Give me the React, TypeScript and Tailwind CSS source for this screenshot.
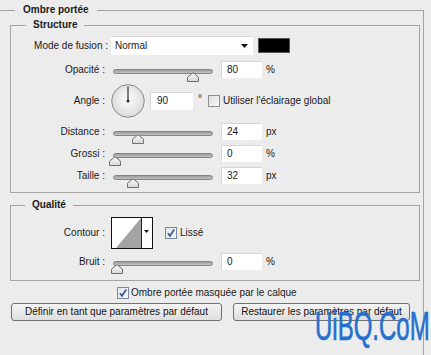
import React from 'react';

function Slider({ at }: { at: number }) {
  return (
    <div className="relative mt-[4px] h-[5px] w-[100px] shrink-0 self-start rounded-full border border-[#858585] bg-[linear-gradient(#9c9c9c,#c2c2c2)]">
      <svg className="absolute top-[2px]" style={{ left: at }} width="12" height="10" viewBox="0 0 12 10">
        <defs>
          <linearGradient id="thumb" x1="0" y1="0" x2="0" y2="1">
            <stop offset="0" stopColor="#fafafa" />
            <stop offset="1" stopColor="#d6d6d6" />
          </linearGradient>
        </defs>
        <path d="M0.5 9.5V5.2L6 0.7L11.5 5.2V9.5Z" fill="url(#thumb)" stroke="#6e6e6e" />
      </svg>
    </div>
  );
}

function Field({ value, unit }: { value: string; unit?: string }) {
  return (
    <>
      <div className="ml-[8px] flex h-[17px] w-[41px] shrink-0 items-center border border-[#d6d6d6] border-r-white border-b-white bg-white pl-[5px]">
        {value}
      </div>
      {unit && <span className="ml-[4px]">{unit}</span>}
    </>
  );
}

function Check({ on }: { on?: boolean }) {
  return (
    <svg width="12" height="12" viewBox="0 0 12 12" className="shrink-0">
      <defs>
        <linearGradient id={on ? 'cbOn' : 'cbOff'} x1="0" y1="0" x2="1" y2="1">
          <stop offset="0" stopColor={on ? '#dfe3ec' : '#dcdcdc'} />
          <stop offset="1" stopColor="#fbfbfb" />
        </linearGradient>
      </defs>
      <rect x="0.5" y="0.5" width="11" height="11" fill={on ? 'url(#cbOn)' : 'url(#cbOff)'} stroke={on ? '#7d879c' : '#8f8f8f'} />
      {on && <path d="M3 6.2L5 9L9.2 2.6" fill="none" stroke="#3b5a99" strokeWidth="1.8" />}
    </svg>
  );
}

function Row({ label, className, children }: { label: string; className?: string; children: React.ReactNode }) {
  return (
    <div className={`flex items-center ${className ?? ''}`}>
      <div className="w-[94px] shrink-0 text-right">{label}</div>
      {children}
    </div>
  );
}

export default function App() {
  return (
    <div className="relative h-[355px] w-[431px] overflow-hidden bg-[#ececec] font-['Liberation_Sans',Arial,sans-serif] text-[10px] leading-[12px] text-[#1a1a1a]">
      <fieldset className="mt-[3px] mr-[7px] border border-b-0 border-l-0 border-[#a3a3a3] pr-[3px] pb-[40px] pl-[10px]">
        <legend className="ml-[5px] px-[8px] font-bold leading-[14px]">Ombre portée</legend>

        <fieldset className="mt-[1px] border border-[#a3a3a3] pb-[8px]">
          <legend className="ml-[15px] px-[7px] font-bold leading-[14px]">Structure</legend>

          <div className="mt-[4px] flex h-[19px] items-center">
            <div className="w-[97px] shrink-0 text-right">Mode de fusion :</div>
            <div className="ml-[3px] flex h-[19px] w-[142px] items-center justify-between border-t border-[#d8d8d8] bg-white pr-[5px] pl-[4px]">
              <span>Normal</span>
              <svg width="7" height="4" viewBox="0 0 7 4">
                <path d="M0 0H7L3.5 4Z" fill="#111" />
              </svg>
            </div>
            <div className="ml-[5px] h-[15px] w-[32px] border border-[#555] bg-black" />
          </div>

          <Row label="Opacité :" className="mt-[6px] h-[17px]">
            <div className="ml-[8px]">
              <Slider at={73} />
            </div>
            <Field value="80" unit="%" />
          </Row>

          <Row label="Angle :" className="mt-[6px] h-[34px]">
            <svg className="ml-[6px] shrink-0" width="34" height="34" viewBox="0 0 34 34">
              <defs>
                <radialGradient id="dial" cx="0.5" cy="0.45" r="0.55">
                  <stop offset="0" stopColor="#ffffff" />
                  <stop offset="1" stopColor="#d9d9d9" />
                </radialGradient>
              </defs>
              <circle cx="17" cy="17" r="16.3" fill="url(#dial)" stroke="#8a8a8a" />
              <line x1="17" y1="17" x2="17" y2="2.5" stroke="#444" strokeWidth="1.4" />
              <circle cx="17" cy="17" r="1.6" fill="#333" />
            </svg>
            <div className="ml-[5px] flex h-[18px] w-[43px] shrink-0 items-center border border-[#d6d6d6] border-r-white border-b-white bg-white pl-[6px]">
              90
            </div>
            <span className="ml-[5px] w-[10px] self-start pt-[9px]">°</span>
            <Check />
            <span className="ml-[3px]">Utiliser l'éclairage global</span>
          </Row>

          <Row label="Distance :" className="mt-[5px] h-[17px]">
            <div className="ml-[8px]">
              <Slider at={18} />
            </div>
            <Field value="24" unit="px" />
          </Row>

          <Row label="Grossi :" className="mt-[5px] h-[17px]">
            <div className="ml-[8px]">
              <Slider at={-5} />
            </div>
            <Field value="0" unit="%" />
          </Row>

          <Row label="Taille :" className="mt-[5px] h-[17px]">
            <div className="ml-[8px]">
              <Slider at={13} />
            </div>
            <Field value="32" unit="px" />
          </Row>
        </fieldset>

        <fieldset className="mt-[5px] border border-[#a3a3a3] pb-[10px]">
          <legend className="ml-[14px] px-[7px] font-bold leading-[14px]">Qualité</legend>

          <Row label="Contour :" className="mt-[5px] h-[32px]">
            <svg className="ml-[6px] shrink-0" width="42" height="32" viewBox="0 0 42 32">
              <rect x="0.5" y="0.5" width="41" height="31" fill="#fff" stroke="#111" />
              <path d="M5 31L30 1V31Z" fill="#a3a3a3" />
              <line x1="30.5" y1="1" x2="30.5" y2="31" stroke="#222" />
              <path d="M33 13H38L35.5 16Z" fill="#111" />
            </svg>
            <div className="ml-[12px]">
              <Check on />
            </div>
            <span className="ml-[3px]">Lissé</span>
          </Row>

          <Row label="Bruit :" className="mt-[4px] h-[17px]">
            <div className="ml-[8px]">
              <Slider at={-3} />
            </div>
            <Field value="0" unit="%" />
          </Row>
        </fieldset>

        <div className="mt-[6px] flex h-[12px] items-center pl-[107px]">
          <Check on />
          <span className="ml-[2px]">Ombre portée masquée par le calque</span>
        </div>

        <div className="mt-[4px] flex gap-[11px] pl-[1px]">
          <button className="h-[18px] w-[211px] rounded-[3px] border border-[#707070] bg-[linear-gradient(#f4f4f4,#dedede)] text-[#111]">
            Définir en tant que paramètres par défaut
          </button>
          <button className="h-[18px] w-[177px] rounded-[3px] border border-[#707070] bg-[linear-gradient(#f4f4f4,#dedede)] text-[#111]">
            Restaurer les paramètres par défaut
          </button>
        </div>
      </fieldset>

      <div className="absolute top-[306px] left-[315px] origin-left scale-x-[0.6] font-['Liberation_Sans',Arial,sans-serif] text-[40px] leading-none whitespace-nowrap text-[#2470cf] [-webkit-text-stroke:0.7px_#2470cf]">
        UiBQ.CoM
      </div>
    </div>
  );
}
